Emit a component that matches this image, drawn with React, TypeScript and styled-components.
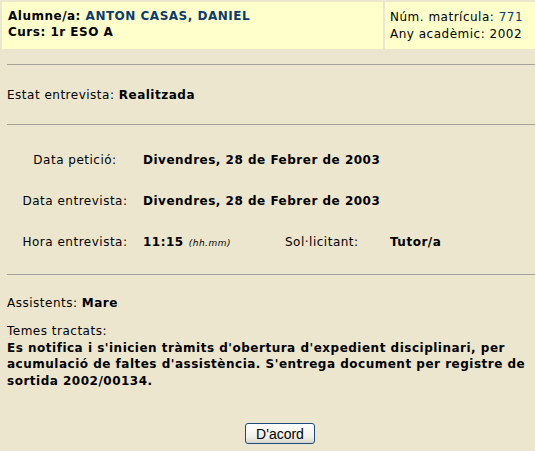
import styled, { createGlobalStyle } from 'styled-components';

const GlobalStyle = createGlobalStyle`
    html, body {
        margin: 0;
        padding: 0;
    }
    body {
        background: #ece6cf;
        font-family: "DejaVu Sans", Verdana, sans-serif;
        font-size: 12px;
        letter-spacing: 0.5px;
        color: #000;
    }
`

const Page = styled.div`
    width: 535px;
    height: 451px;
    overflow: hidden;
`

const Header = styled.div`
    display: flex;
    gap: 2px;
    padding: 2px 0 0 2px;
`

const StudentBox = styled.div`
    flex: 1;
    height: 47px;
    box-sizing: border-box;
    padding: 6px 6px;
    background: #ffffcc;
    font-weight: bold;
    line-height: 16px;
`

const RecordBox = styled.div`
    width: 150px;
    height: 47px;
    box-sizing: border-box;
    padding: 7px 5px;
    background: #ffffcc;
    line-height: 17px;
    white-space: nowrap;
`

const Blue = styled.span`
    color: #0b3a6c;
`

const Rule = styled.hr<{ $top: number }>`
    margin: ${p => p.$top}px 0 0 7px;
    height: 0;
    border: 0;
    border-top: 1px solid #a3a29c;
`

const Line = styled.div<{ $top: number }>`
    margin-top: ${p => p.$top}px;
    padding-left: 7px;
    line-height: 13px;
`

const Details = styled.div`
    display: grid;
    grid-template-columns: 136px 142px 105px 1fr;
    row-gap: 28px;
    margin-top: 29px;
    padding-left: 7px;
    line-height: 13px;
`

const Label = styled.div`
    text-align: center;
`

const Value = styled.div<{ $wide?: boolean }>`
    font-weight: bold;
    grid-column: ${p => (p.$wide ? '2 / -1' : 'auto')};
`

const Hint = styled.span`
    font-weight: normal;
    font-style: italic;
    font-size: 9px;
    margin-left: 5px;
`

const Topics = styled.div`
    margin-top: 13px;
    padding: 0 4px 0 7px;
    line-height: 16.5px;
`

const Summary = styled.div`
    font-weight: bold;
`

const Actions = styled.div`
    display: flex;
    justify-content: center;
    margin-top: 34px;
    padding-left: 25px;
`

const Button = styled.button`
    width: 70px;
    height: 21px;
    padding: 0;
    border: 1px solid #1c4a7e;
    border-radius: 3px;
    background: linear-gradient(#ffffff, #f0efe8 70%, #d8d5c8);
    font-family: "Liberation Sans", Arial, sans-serif;
    font-size: 14px;
    letter-spacing: 0;
    color: #000;
`

const App = () => {
    return (
        <Page>
            <GlobalStyle />
            <Header>
                <StudentBox>
                    <div>Alumne/a: <Blue>ANTON CASAS, DANIEL</Blue></div>
                    <div>Curs: 1r ESO A</div>
                </StudentBox>
                <RecordBox>
                    <div>Núm. matrícula: <Blue>771</Blue></div>
                    <div>Any acadèmic: 2002</div>
                </RecordBox>
            </Header>

            <Rule $top={15} />
            <Line $top={24}>Estat entrevista: <b>Realitzada</b></Line>
            <Rule $top={22} />

            <Details>
                <Label>Data petició:</Label>
                <Value $wide>Divendres, 28 de Febrer de 2003</Value>
                <Label>Data entrevista:</Label>
                <Value $wide>Divendres, 28 de Febrer de 2003</Value>
                <Label>Hora entrevista:</Label>
                <Value>11:15<Hint>(hh.mm)</Hint></Value>
                <div>Sol·licitant:</div>
                <Value>Tutor/a</Value>
            </Details>

            <Rule $top={24} />
            <Line $top={22}>Assistents: <b>Mare</b></Line>

            <Topics>
                <div>Temes tractats:</div>
                <Summary>
                    Es notifica i s'inicien tràmits d'obertura d'expedient disciplinari, per
                    acumulació de faltes d'assistència. S'entrega document per registre de
                    sortida 2002/00134.
                </Summary>
            </Topics>

            <Actions>
                <Button>D'acord</Button>
            </Actions>
        </Page>
    );
};

export default App
